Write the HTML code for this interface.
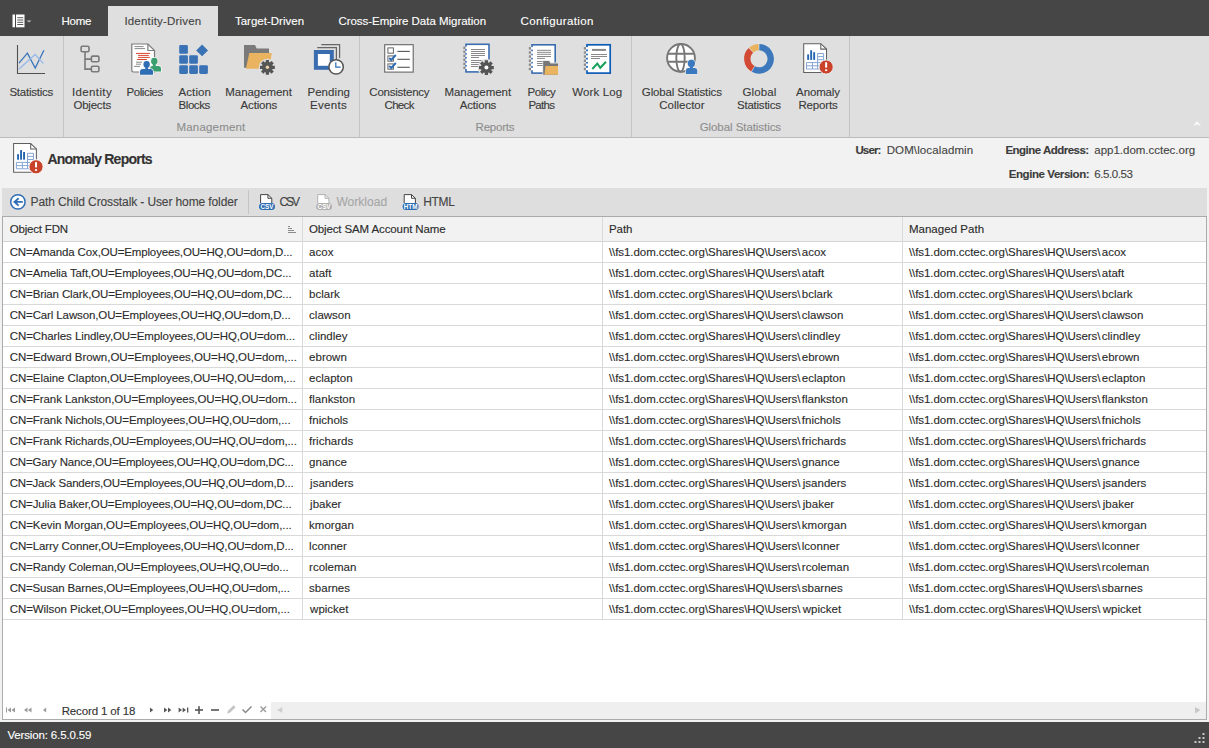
<!DOCTYPE html>
<html><head><meta charset="utf-8"><style>
html,body{margin:0;padding:0;}
body{width:1209px;height:748px;position:relative;overflow:hidden;background:#f2f2f2;font-family:"Liberation Sans", sans-serif;}
.r{position:absolute;}
.t{position:absolute;white-space:nowrap;-webkit-text-stroke:0.12px currentColor;}
</style></head><body>
<div class="r" style="left:0px;top:0px;width:1209px;height:36px;background:#464646;"></div>
<div class="r" style="left:0px;top:36px;width:1209px;height:101px;background:#dfdfdf;"></div>
<div class="r" style="left:0px;top:137px;width:1209px;height:1px;background:#bcbcbc;"></div>
<div class="r" style="left:0px;top:138px;width:1209px;height:50px;background:#f2f2f2;"></div>
<div class="r" style="left:108px;top:6px;width:110px;height:30px;background:#dfdfdf;"></div>
<div class="t" style="left:61.40px;top:16px;font-size:11.5px;line-height:11.5px;color:#fff;font-weight:normal;letter-spacing:-0.227px;">Home</div>
<div class="t" style="left:124.40px;top:16px;font-size:11.5px;line-height:11.5px;color:#444;font-weight:normal;letter-spacing:0.190px;">Identity-Driven</div>
<div class="t" style="left:234.90px;top:16px;font-size:11.5px;line-height:11.5px;color:#fff;font-weight:normal;letter-spacing:0.014px;">Target-Driven</div>
<div class="t" style="left:338.40px;top:16px;font-size:11.5px;line-height:11.5px;color:#fff;font-weight:normal;letter-spacing:-0.022px;">Cross-Empire Data Migration</div>
<div class="t" style="left:520.50px;top:16px;font-size:11.5px;line-height:11.5px;color:#fff;font-weight:normal;letter-spacing:0.366px;">Configuration</div>
<svg class="r" style="left:10px;top:12px" width="24" height="18" viewBox="0 0 24 18"><rect x="2.5" y="2.5" width="2.5" height="12.8" fill="#fff"/><rect x="6" y="2.5" width="8.5" height="12.8" fill="#fff"/><g stroke="#464646" stroke-width="0.9"><line x1="7.3" y1="5.7" x2="13.3" y2="5.7"/><line x1="7.3" y1="8" x2="13.3" y2="8"/><line x1="7.3" y1="10.3" x2="13.3" y2="10.3"/><line x1="7.3" y1="12.5" x2="13.3" y2="12.5"/></g><path d="M16.5 8.5 L21.5 8.5 L19 10.5 Z" fill="#bbb"/></svg>
<div class="r" style="left:63px;top:36px;width:1px;height:101px;background:#c4c4c4;"></div>
<div class="r" style="left:359px;top:36px;width:1px;height:101px;background:#c4c4c4;"></div>
<div class="r" style="left:631px;top:36px;width:1px;height:101px;background:#c4c4c4;"></div>
<div class="r" style="left:849px;top:36px;width:1px;height:101px;background:#c4c4c4;"></div>
<div class="t" style="left:9.40px;top:87px;font-size:11.5px;line-height:11.5px;color:#3a3a3a;font-weight:normal;letter-spacing:-0.229px;">Statistics</div>
<div class="t" style="left:71.90px;top:87px;font-size:11.5px;line-height:11.5px;color:#3a3a3a;font-weight:normal;letter-spacing:0.382px;">Identity</div>
<div class="t" style="left:73.40px;top:100px;font-size:11.5px;line-height:11.5px;color:#3a3a3a;font-weight:normal;letter-spacing:-0.206px;">Objects</div>
<div class="t" style="left:126.40px;top:87px;font-size:11.5px;line-height:11.5px;color:#3a3a3a;font-weight:normal;letter-spacing:-0.382px;">Policies</div>
<div class="t" style="left:178.50px;top:87px;font-size:11.5px;line-height:11.5px;color:#3a3a3a;font-weight:normal;letter-spacing:0.087px;">Action</div>
<div class="t" style="left:178.50px;top:100px;font-size:11.5px;line-height:11.5px;color:#3a3a3a;font-weight:normal;letter-spacing:-0.424px;">Blocks</div>
<div class="t" style="left:225.35px;top:87px;font-size:11.5px;line-height:11.5px;color:#3a3a3a;font-weight:normal;letter-spacing:-0.070px;">Management</div>
<div class="t" style="left:240.60px;top:100px;font-size:11.5px;line-height:11.5px;color:#3a3a3a;font-weight:normal;letter-spacing:-0.194px;">Actions</div>
<div class="t" style="left:307.40px;top:87px;font-size:11.5px;line-height:11.5px;color:#3a3a3a;font-weight:normal;letter-spacing:0.065px;">Pending</div>
<div class="t" style="left:310.00px;top:100px;font-size:11.5px;line-height:11.5px;color:#3a3a3a;font-weight:normal;letter-spacing:0.319px;">Events</div>
<div class="t" style="left:369.35px;top:87px;font-size:11.5px;line-height:11.5px;color:#3a3a3a;font-weight:normal;letter-spacing:-0.239px;">Consistency</div>
<div class="t" style="left:384.55px;top:100px;font-size:11.5px;line-height:11.5px;color:#3a3a3a;font-weight:normal;letter-spacing:-0.687px;">Check</div>
<div class="t" style="left:444.45px;top:87px;font-size:11.5px;line-height:11.5px;color:#3a3a3a;font-weight:normal;letter-spacing:-0.048px;">Management</div>
<div class="t" style="left:459.80px;top:100px;font-size:11.5px;line-height:11.5px;color:#3a3a3a;font-weight:normal;letter-spacing:-0.194px;">Actions</div>
<div class="t" style="left:527.50px;top:87px;font-size:11.5px;line-height:11.5px;color:#3a3a3a;font-weight:normal;letter-spacing:-0.465px;">Policy</div>
<div class="t" style="left:528.40px;top:100px;font-size:11.5px;line-height:11.5px;color:#3a3a3a;font-weight:normal;letter-spacing:-0.714px;">Paths</div>
<div class="t" style="left:572.25px;top:87px;font-size:11.5px;line-height:11.5px;color:#3a3a3a;font-weight:normal;letter-spacing:0.127px;">Work Log</div>
<div class="t" style="left:641.85px;top:87px;font-size:11.5px;line-height:11.5px;color:#3a3a3a;font-weight:normal;letter-spacing:-0.150px;">Global Statistics</div>
<div class="t" style="left:659.30px;top:100px;font-size:11.5px;line-height:11.5px;color:#3a3a3a;font-weight:normal;letter-spacing:-0.018px;">Collector</div>
<div class="t" style="left:742.50px;top:87px;font-size:11.5px;line-height:11.5px;color:#3a3a3a;font-weight:normal;letter-spacing:0.103px;">Global</div>
<div class="t" style="left:737.00px;top:100px;font-size:11.5px;line-height:11.5px;color:#3a3a3a;font-weight:normal;letter-spacing:-0.229px;">Statistics</div>
<div class="t" style="left:796.10px;top:87px;font-size:11.5px;line-height:11.5px;color:#3a3a3a;font-weight:normal;letter-spacing:-0.132px;">Anomaly</div>
<div class="t" style="left:798.50px;top:100px;font-size:11.5px;line-height:11.5px;color:#3a3a3a;font-weight:normal;letter-spacing:-0.186px;">Reports</div>
<div class="t" style="left:176.55px;top:122px;font-size:11.5px;line-height:11.5px;color:#8e8e8e;font-weight:normal;letter-spacing:0.175px;">Management</div>
<div class="t" style="left:475.55px;top:122px;font-size:11.5px;line-height:11.5px;color:#8e8e8e;font-weight:normal;letter-spacing:-0.203px;">Reports</div>
<div class="t" style="left:699.65px;top:122px;font-size:11.5px;line-height:11.5px;color:#8e8e8e;font-weight:normal;letter-spacing:-0.062px;">Global Statistics</div>
<svg class="r" style="left:1191px;top:119px" width="12" height="8" viewBox="0 0 12 8"><path d="M2 6.9 L6 2.3 L10 6.9 L6 5.2 Z" fill="#fff"/></svg>
<div class="t" style="left:47.40px;top:152px;font-size:14px;line-height:14px;color:#333;font-weight:bold;letter-spacing:-0.766px;">Anomaly Reports</div>
<div class="t" style="left:855.40px;top:145px;font-size:11.5px;line-height:11.5px;color:#3c3c3c;font-weight:bold;letter-spacing:-0.843px;">User:</div>
<div class="t" style="left:886.70px;top:145px;font-size:11.5px;line-height:11.5px;color:#444;font-weight:normal;letter-spacing:0.115px;">DOM\localadmin</div>
<div class="t" style="left:1005.40px;top:145px;font-size:11.5px;line-height:11.5px;color:#3c3c3c;font-weight:bold;letter-spacing:-0.511px;">Engine Address:</div>
<div class="t" style="left:1094.30px;top:145px;font-size:11.5px;line-height:11.5px;color:#444;font-weight:normal;letter-spacing:-0.012px;">app1.dom.cctec.org</div>
<div class="t" style="left:1008.80px;top:169px;font-size:11.5px;line-height:11.5px;color:#3c3c3c;font-weight:bold;letter-spacing:-0.434px;">Engine Version:</div>
<div class="t" style="left:1094.30px;top:169px;font-size:11.5px;line-height:11.5px;color:#444;font-weight:normal;letter-spacing:-0.438px;">6.5.0.53</div>
<div class="r" style="left:2px;top:188px;width:1205px;height:28px;background:#dedede;"></div>
<div class="r" style="left:248px;top:190px;width:1px;height:24px;background:#c4c4c4;"></div>
<div class="t" style="left:30.60px;top:196px;font-size:12px;line-height:12px;color:#444;font-weight:normal;letter-spacing:-0.111px;">Path Child Crosstalk - User home folder</div>
<div class="t" style="left:279.60px;top:196px;font-size:12px;line-height:12px;color:#444;font-weight:normal;letter-spacing:-2.185px;">CSV</div>
<div class="t" style="left:336.40px;top:196px;font-size:12px;line-height:12px;color:#a6a6a6;font-weight:normal;letter-spacing:0.044px;">Workload</div>
<div class="t" style="left:423.20px;top:196px;font-size:12px;line-height:12px;color:#444;font-weight:normal;letter-spacing:-0.297px;">HTML</div>
<div class="r" style="left:2px;top:216px;width:1205px;height:504px;background:#ffffff;box-sizing:border-box;border:1px solid #ababab;"></div>
<div class="r" style="left:3px;top:217px;width:1203px;height:24px;background:#f2f2f2;"></div>
<div class="r" style="left:3px;top:241px;width:1203px;height:1px;background:#d4d4d4;"></div>
<div class="r" style="left:3px;top:262px;width:1203px;height:1px;background:#d9d9d9;"></div>
<div class="r" style="left:3px;top:283px;width:1203px;height:1px;background:#d9d9d9;"></div>
<div class="r" style="left:3px;top:304px;width:1203px;height:1px;background:#d9d9d9;"></div>
<div class="r" style="left:3px;top:325px;width:1203px;height:1px;background:#d9d9d9;"></div>
<div class="r" style="left:3px;top:346px;width:1203px;height:1px;background:#d9d9d9;"></div>
<div class="r" style="left:3px;top:367px;width:1203px;height:1px;background:#d9d9d9;"></div>
<div class="r" style="left:3px;top:388px;width:1203px;height:1px;background:#d9d9d9;"></div>
<div class="r" style="left:3px;top:409px;width:1203px;height:1px;background:#d9d9d9;"></div>
<div class="r" style="left:3px;top:430px;width:1203px;height:1px;background:#d9d9d9;"></div>
<div class="r" style="left:3px;top:451px;width:1203px;height:1px;background:#d9d9d9;"></div>
<div class="r" style="left:3px;top:472px;width:1203px;height:1px;background:#d9d9d9;"></div>
<div class="r" style="left:3px;top:493px;width:1203px;height:1px;background:#d9d9d9;"></div>
<div class="r" style="left:3px;top:514px;width:1203px;height:1px;background:#d9d9d9;"></div>
<div class="r" style="left:3px;top:535px;width:1203px;height:1px;background:#d9d9d9;"></div>
<div class="r" style="left:3px;top:556px;width:1203px;height:1px;background:#d9d9d9;"></div>
<div class="r" style="left:3px;top:577px;width:1203px;height:1px;background:#d9d9d9;"></div>
<div class="r" style="left:3px;top:598px;width:1203px;height:1px;background:#d9d9d9;"></div>
<div class="r" style="left:3px;top:619px;width:1203px;height:1px;background:#d9d9d9;"></div>
<div class="r" style="left:302px;top:217px;width:1px;height:402px;background:#d9d9d9;"></div>
<div class="r" style="left:602px;top:217px;width:1px;height:402px;background:#d9d9d9;"></div>
<div class="r" style="left:902px;top:217px;width:1px;height:402px;background:#d9d9d9;"></div>
<div class="t" style="left:9.70px;top:224px;font-size:11.5px;line-height:11.5px;color:#2b2b2b;font-weight:normal;letter-spacing:-0.185px;">Object FDN</div>
<div class="t" style="left:308.90px;top:224px;font-size:11.5px;line-height:11.5px;color:#2b2b2b;font-weight:normal;letter-spacing:-0.117px;">Object SAM Account Name</div>
<div class="t" style="left:609.00px;top:224px;font-size:11.5px;line-height:11.5px;color:#2b2b2b;font-weight:normal;letter-spacing:-0.087px;">Path</div>
<div class="t" style="left:908.90px;top:224px;font-size:11.5px;line-height:11.5px;color:#2b2b2b;font-weight:normal;letter-spacing:0.035px;">Managed Path</div>
<svg class="r" style="left:286px;top:224px" width="12" height="12" viewBox="0 0 12 12"><g fill="#8a8a8a"><rect x="2" y="2" width="2" height="1"/><rect x="2" y="4" width="4" height="1"/><rect x="2" y="6" width="6" height="1"/><rect x="2" y="8" width="8" height="1"/></g></svg>
<div class="t" style="left:9.70px;top:247px;font-size:11.5px;line-height:11.5px;color:#2b2b2b;font-weight:normal;letter-spacing:-0.142px;">CN=Amanda Cox,OU=Employees,OU=HQ,OU=dom,D...</div>
<div class="t" style="left:309.10px;top:247px;font-size:11.5px;line-height:11.5px;color:#2b2b2b;font-weight:normal;">acox</div>
<div class="t" style="left:608.90px;top:247px;font-size:11.5px;line-height:11.5px;color:#2b2b2b;font-weight:normal;letter-spacing:-0.059px;">\\fs1.dom.cctec.org\Shares\HQ\Users\</div>
<div class="t" style="left:801.80px;top:247px;font-size:11.5px;line-height:11.5px;color:#2b2b2b;font-weight:normal;">acox</div>
<div class="t" style="left:908.90px;top:247px;font-size:11.5px;line-height:11.5px;color:#2b2b2b;font-weight:normal;letter-spacing:-0.059px;">\\fs1.dom.cctec.org\Shares\HQ\Users\</div>
<div class="t" style="left:1101.80px;top:247px;font-size:11.5px;line-height:11.5px;color:#2b2b2b;font-weight:normal;">acox</div>
<div class="t" style="left:9.70px;top:268px;font-size:11.5px;line-height:11.5px;color:#2b2b2b;font-weight:normal;letter-spacing:-0.124px;">CN=Amelia Taft,OU=Employees,OU=HQ,OU=dom,DC...</div>
<div class="t" style="left:309.10px;top:268px;font-size:11.5px;line-height:11.5px;color:#2b2b2b;font-weight:normal;">ataft</div>
<div class="t" style="left:608.90px;top:268px;font-size:11.5px;line-height:11.5px;color:#2b2b2b;font-weight:normal;letter-spacing:-0.059px;">\\fs1.dom.cctec.org\Shares\HQ\Users\</div>
<div class="t" style="left:801.80px;top:268px;font-size:11.5px;line-height:11.5px;color:#2b2b2b;font-weight:normal;">ataft</div>
<div class="t" style="left:908.90px;top:268px;font-size:11.5px;line-height:11.5px;color:#2b2b2b;font-weight:normal;letter-spacing:-0.059px;">\\fs1.dom.cctec.org\Shares\HQ\Users\</div>
<div class="t" style="left:1101.80px;top:268px;font-size:11.5px;line-height:11.5px;color:#2b2b2b;font-weight:normal;">ataft</div>
<div class="t" style="left:9.70px;top:289px;font-size:11.5px;line-height:11.5px;color:#2b2b2b;font-weight:normal;letter-spacing:-0.124px;">CN=Brian Clark,OU=Employees,OU=HQ,OU=dom,DC...</div>
<div class="t" style="left:309.10px;top:289px;font-size:11.5px;line-height:11.5px;color:#2b2b2b;font-weight:normal;">bclark</div>
<div class="t" style="left:608.90px;top:289px;font-size:11.5px;line-height:11.5px;color:#2b2b2b;font-weight:normal;letter-spacing:-0.059px;">\\fs1.dom.cctec.org\Shares\HQ\Users\</div>
<div class="t" style="left:801.80px;top:289px;font-size:11.5px;line-height:11.5px;color:#2b2b2b;font-weight:normal;">bclark</div>
<div class="t" style="left:908.90px;top:289px;font-size:11.5px;line-height:11.5px;color:#2b2b2b;font-weight:normal;letter-spacing:-0.059px;">\\fs1.dom.cctec.org\Shares\HQ\Users\</div>
<div class="t" style="left:1101.80px;top:289px;font-size:11.5px;line-height:11.5px;color:#2b2b2b;font-weight:normal;">bclark</div>
<div class="t" style="left:9.70px;top:310px;font-size:11.5px;line-height:11.5px;color:#2b2b2b;font-weight:normal;letter-spacing:-0.121px;">CN=Carl Lawson,OU=Employees,OU=HQ,OU=dom,D...</div>
<div class="t" style="left:309.10px;top:310px;font-size:11.5px;line-height:11.5px;color:#2b2b2b;font-weight:normal;">clawson</div>
<div class="t" style="left:608.90px;top:310px;font-size:11.5px;line-height:11.5px;color:#2b2b2b;font-weight:normal;letter-spacing:-0.059px;">\\fs1.dom.cctec.org\Shares\HQ\Users\</div>
<div class="t" style="left:801.80px;top:310px;font-size:11.5px;line-height:11.5px;color:#2b2b2b;font-weight:normal;">clawson</div>
<div class="t" style="left:908.90px;top:310px;font-size:11.5px;line-height:11.5px;color:#2b2b2b;font-weight:normal;letter-spacing:-0.059px;">\\fs1.dom.cctec.org\Shares\HQ\Users\</div>
<div class="t" style="left:1101.80px;top:310px;font-size:11.5px;line-height:11.5px;color:#2b2b2b;font-weight:normal;">clawson</div>
<div class="t" style="left:9.70px;top:331px;font-size:11.5px;line-height:11.5px;color:#2b2b2b;font-weight:normal;letter-spacing:-0.085px;">CN=Charles Lindley,OU=Employees,OU=HQ,OU=dom...</div>
<div class="t" style="left:309.10px;top:331px;font-size:11.5px;line-height:11.5px;color:#2b2b2b;font-weight:normal;">clindley</div>
<div class="t" style="left:608.90px;top:331px;font-size:11.5px;line-height:11.5px;color:#2b2b2b;font-weight:normal;letter-spacing:-0.059px;">\\fs1.dom.cctec.org\Shares\HQ\Users\</div>
<div class="t" style="left:801.80px;top:331px;font-size:11.5px;line-height:11.5px;color:#2b2b2b;font-weight:normal;">clindley</div>
<div class="t" style="left:908.90px;top:331px;font-size:11.5px;line-height:11.5px;color:#2b2b2b;font-weight:normal;letter-spacing:-0.059px;">\\fs1.dom.cctec.org\Shares\HQ\Users\</div>
<div class="t" style="left:1101.80px;top:331px;font-size:11.5px;line-height:11.5px;color:#2b2b2b;font-weight:normal;">clindley</div>
<div class="t" style="left:9.70px;top:352px;font-size:11.5px;line-height:11.5px;color:#2b2b2b;font-weight:normal;letter-spacing:-0.038px;">CN=Edward Brown,OU=Employees,OU=HQ,OU=dom,...</div>
<div class="t" style="left:309.10px;top:352px;font-size:11.5px;line-height:11.5px;color:#2b2b2b;font-weight:normal;">ebrown</div>
<div class="t" style="left:608.90px;top:352px;font-size:11.5px;line-height:11.5px;color:#2b2b2b;font-weight:normal;letter-spacing:-0.059px;">\\fs1.dom.cctec.org\Shares\HQ\Users\</div>
<div class="t" style="left:801.80px;top:352px;font-size:11.5px;line-height:11.5px;color:#2b2b2b;font-weight:normal;">ebrown</div>
<div class="t" style="left:908.90px;top:352px;font-size:11.5px;line-height:11.5px;color:#2b2b2b;font-weight:normal;letter-spacing:-0.059px;">\\fs1.dom.cctec.org\Shares\HQ\Users\</div>
<div class="t" style="left:1101.80px;top:352px;font-size:11.5px;line-height:11.5px;color:#2b2b2b;font-weight:normal;">ebrown</div>
<div class="t" style="left:9.70px;top:373px;font-size:11.5px;line-height:11.5px;color:#2b2b2b;font-weight:normal;letter-spacing:-0.061px;">CN=Elaine Clapton,OU=Employees,OU=HQ,OU=dom,...</div>
<div class="t" style="left:309.10px;top:373px;font-size:11.5px;line-height:11.5px;color:#2b2b2b;font-weight:normal;">eclapton</div>
<div class="t" style="left:608.90px;top:373px;font-size:11.5px;line-height:11.5px;color:#2b2b2b;font-weight:normal;letter-spacing:-0.059px;">\\fs1.dom.cctec.org\Shares\HQ\Users\</div>
<div class="t" style="left:801.80px;top:373px;font-size:11.5px;line-height:11.5px;color:#2b2b2b;font-weight:normal;">eclapton</div>
<div class="t" style="left:908.90px;top:373px;font-size:11.5px;line-height:11.5px;color:#2b2b2b;font-weight:normal;letter-spacing:-0.059px;">\\fs1.dom.cctec.org\Shares\HQ\Users\</div>
<div class="t" style="left:1101.80px;top:373px;font-size:11.5px;line-height:11.5px;color:#2b2b2b;font-weight:normal;">eclapton</div>
<div class="t" style="left:9.70px;top:394px;font-size:11.5px;line-height:11.5px;color:#2b2b2b;font-weight:normal;letter-spacing:-0.066px;">CN=Frank Lankston,OU=Employees,OU=HQ,OU=dom...</div>
<div class="t" style="left:309.10px;top:394px;font-size:11.5px;line-height:11.5px;color:#2b2b2b;font-weight:normal;">flankston</div>
<div class="t" style="left:608.90px;top:394px;font-size:11.5px;line-height:11.5px;color:#2b2b2b;font-weight:normal;letter-spacing:-0.059px;">\\fs1.dom.cctec.org\Shares\HQ\Users\</div>
<div class="t" style="left:801.80px;top:394px;font-size:11.5px;line-height:11.5px;color:#2b2b2b;font-weight:normal;">flankston</div>
<div class="t" style="left:908.90px;top:394px;font-size:11.5px;line-height:11.5px;color:#2b2b2b;font-weight:normal;letter-spacing:-0.059px;">\\fs1.dom.cctec.org\Shares\HQ\Users\</div>
<div class="t" style="left:1101.80px;top:394px;font-size:11.5px;line-height:11.5px;color:#2b2b2b;font-weight:normal;">flankston</div>
<div class="t" style="left:9.70px;top:415px;font-size:11.5px;line-height:11.5px;color:#2b2b2b;font-weight:normal;letter-spacing:-0.076px;">CN=Frank Nichols,OU=Employees,OU=HQ,OU=dom,...</div>
<div class="t" style="left:309.10px;top:415px;font-size:11.5px;line-height:11.5px;color:#2b2b2b;font-weight:normal;">fnichols</div>
<div class="t" style="left:608.90px;top:415px;font-size:11.5px;line-height:11.5px;color:#2b2b2b;font-weight:normal;letter-spacing:-0.059px;">\\fs1.dom.cctec.org\Shares\HQ\Users\</div>
<div class="t" style="left:801.80px;top:415px;font-size:11.5px;line-height:11.5px;color:#2b2b2b;font-weight:normal;">fnichols</div>
<div class="t" style="left:908.90px;top:415px;font-size:11.5px;line-height:11.5px;color:#2b2b2b;font-weight:normal;letter-spacing:-0.059px;">\\fs1.dom.cctec.org\Shares\HQ\Users\</div>
<div class="t" style="left:1101.80px;top:415px;font-size:11.5px;line-height:11.5px;color:#2b2b2b;font-weight:normal;">fnichols</div>
<div class="t" style="left:9.70px;top:436px;font-size:11.5px;line-height:11.5px;color:#2b2b2b;font-weight:normal;letter-spacing:-0.106px;">CN=Frank Richards,OU=Employees,OU=HQ,OU=dom,...</div>
<div class="t" style="left:309.10px;top:436px;font-size:11.5px;line-height:11.5px;color:#2b2b2b;font-weight:normal;">frichards</div>
<div class="t" style="left:608.90px;top:436px;font-size:11.5px;line-height:11.5px;color:#2b2b2b;font-weight:normal;letter-spacing:-0.059px;">\\fs1.dom.cctec.org\Shares\HQ\Users\</div>
<div class="t" style="left:801.80px;top:436px;font-size:11.5px;line-height:11.5px;color:#2b2b2b;font-weight:normal;">frichards</div>
<div class="t" style="left:908.90px;top:436px;font-size:11.5px;line-height:11.5px;color:#2b2b2b;font-weight:normal;letter-spacing:-0.059px;">\\fs1.dom.cctec.org\Shares\HQ\Users\</div>
<div class="t" style="left:1101.80px;top:436px;font-size:11.5px;line-height:11.5px;color:#2b2b2b;font-weight:normal;">frichards</div>
<div class="t" style="left:9.70px;top:457px;font-size:11.5px;line-height:11.5px;color:#2b2b2b;font-weight:normal;letter-spacing:-0.181px;">CN=Gary Nance,OU=Employees,OU=HQ,OU=dom,DC...</div>
<div class="t" style="left:309.10px;top:457px;font-size:11.5px;line-height:11.5px;color:#2b2b2b;font-weight:normal;">gnance</div>
<div class="t" style="left:608.90px;top:457px;font-size:11.5px;line-height:11.5px;color:#2b2b2b;font-weight:normal;letter-spacing:-0.059px;">\\fs1.dom.cctec.org\Shares\HQ\Users\</div>
<div class="t" style="left:801.80px;top:457px;font-size:11.5px;line-height:11.5px;color:#2b2b2b;font-weight:normal;">gnance</div>
<div class="t" style="left:908.90px;top:457px;font-size:11.5px;line-height:11.5px;color:#2b2b2b;font-weight:normal;letter-spacing:-0.059px;">\\fs1.dom.cctec.org\Shares\HQ\Users\</div>
<div class="t" style="left:1101.80px;top:457px;font-size:11.5px;line-height:11.5px;color:#2b2b2b;font-weight:normal;">gnance</div>
<div class="t" style="left:9.70px;top:478px;font-size:11.5px;line-height:11.5px;color:#2b2b2b;font-weight:normal;letter-spacing:-0.177px;">CN=Jack Sanders,OU=Employees,OU=HQ,OU=dom,D...</div>
<div class="t" style="left:310.10px;top:478px;font-size:11.5px;line-height:11.5px;color:#2b2b2b;font-weight:normal;">jsanders</div>
<div class="t" style="left:608.90px;top:478px;font-size:11.5px;line-height:11.5px;color:#2b2b2b;font-weight:normal;letter-spacing:-0.059px;">\\fs1.dom.cctec.org\Shares\HQ\Users\</div>
<div class="t" style="left:802.80px;top:478px;font-size:11.5px;line-height:11.5px;color:#2b2b2b;font-weight:normal;">jsanders</div>
<div class="t" style="left:908.90px;top:478px;font-size:11.5px;line-height:11.5px;color:#2b2b2b;font-weight:normal;letter-spacing:-0.059px;">\\fs1.dom.cctec.org\Shares\HQ\Users\</div>
<div class="t" style="left:1102.80px;top:478px;font-size:11.5px;line-height:11.5px;color:#2b2b2b;font-weight:normal;">jsanders</div>
<div class="t" style="left:9.70px;top:499px;font-size:11.5px;line-height:11.5px;color:#2b2b2b;font-weight:normal;letter-spacing:-0.110px;">CN=Julia Baker,OU=Employees,OU=HQ,OU=dom,DC...</div>
<div class="t" style="left:310.10px;top:499px;font-size:11.5px;line-height:11.5px;color:#2b2b2b;font-weight:normal;">jbaker</div>
<div class="t" style="left:608.90px;top:499px;font-size:11.5px;line-height:11.5px;color:#2b2b2b;font-weight:normal;letter-spacing:-0.059px;">\\fs1.dom.cctec.org\Shares\HQ\Users\</div>
<div class="t" style="left:802.80px;top:499px;font-size:11.5px;line-height:11.5px;color:#2b2b2b;font-weight:normal;">jbaker</div>
<div class="t" style="left:908.90px;top:499px;font-size:11.5px;line-height:11.5px;color:#2b2b2b;font-weight:normal;letter-spacing:-0.059px;">\\fs1.dom.cctec.org\Shares\HQ\Users\</div>
<div class="t" style="left:1102.80px;top:499px;font-size:11.5px;line-height:11.5px;color:#2b2b2b;font-weight:normal;">jbaker</div>
<div class="t" style="left:9.70px;top:520px;font-size:11.5px;line-height:11.5px;color:#2b2b2b;font-weight:normal;letter-spacing:-0.069px;">CN=Kevin Morgan,OU=Employees,OU=HQ,OU=dom,...</div>
<div class="t" style="left:309.10px;top:520px;font-size:11.5px;line-height:11.5px;color:#2b2b2b;font-weight:normal;">kmorgan</div>
<div class="t" style="left:608.90px;top:520px;font-size:11.5px;line-height:11.5px;color:#2b2b2b;font-weight:normal;letter-spacing:-0.059px;">\\fs1.dom.cctec.org\Shares\HQ\Users\</div>
<div class="t" style="left:801.80px;top:520px;font-size:11.5px;line-height:11.5px;color:#2b2b2b;font-weight:normal;">kmorgan</div>
<div class="t" style="left:908.90px;top:520px;font-size:11.5px;line-height:11.5px;color:#2b2b2b;font-weight:normal;letter-spacing:-0.059px;">\\fs1.dom.cctec.org\Shares\HQ\Users\</div>
<div class="t" style="left:1101.80px;top:520px;font-size:11.5px;line-height:11.5px;color:#2b2b2b;font-weight:normal;">kmorgan</div>
<div class="t" style="left:9.70px;top:541px;font-size:11.5px;line-height:11.5px;color:#2b2b2b;font-weight:normal;letter-spacing:-0.106px;">CN=Larry Conner,OU=Employees,OU=HQ,OU=dom,D...</div>
<div class="t" style="left:309.10px;top:541px;font-size:11.5px;line-height:11.5px;color:#2b2b2b;font-weight:normal;">lconner</div>
<div class="t" style="left:608.90px;top:541px;font-size:11.5px;line-height:11.5px;color:#2b2b2b;font-weight:normal;letter-spacing:-0.059px;">\\fs1.dom.cctec.org\Shares\HQ\Users\</div>
<div class="t" style="left:801.80px;top:541px;font-size:11.5px;line-height:11.5px;color:#2b2b2b;font-weight:normal;">lconner</div>
<div class="t" style="left:908.90px;top:541px;font-size:11.5px;line-height:11.5px;color:#2b2b2b;font-weight:normal;letter-spacing:-0.059px;">\\fs1.dom.cctec.org\Shares\HQ\Users\</div>
<div class="t" style="left:1101.80px;top:541px;font-size:11.5px;line-height:11.5px;color:#2b2b2b;font-weight:normal;">lconner</div>
<div class="t" style="left:9.70px;top:562px;font-size:11.5px;line-height:11.5px;color:#2b2b2b;font-weight:normal;letter-spacing:-0.111px;">CN=Randy Coleman,OU=Employees,OU=HQ,OU=do...</div>
<div class="t" style="left:309.10px;top:562px;font-size:11.5px;line-height:11.5px;color:#2b2b2b;font-weight:normal;">rcoleman</div>
<div class="t" style="left:608.90px;top:562px;font-size:11.5px;line-height:11.5px;color:#2b2b2b;font-weight:normal;letter-spacing:-0.059px;">\\fs1.dom.cctec.org\Shares\HQ\Users\</div>
<div class="t" style="left:801.80px;top:562px;font-size:11.5px;line-height:11.5px;color:#2b2b2b;font-weight:normal;">rcoleman</div>
<div class="t" style="left:908.90px;top:562px;font-size:11.5px;line-height:11.5px;color:#2b2b2b;font-weight:normal;letter-spacing:-0.059px;">\\fs1.dom.cctec.org\Shares\HQ\Users\</div>
<div class="t" style="left:1101.80px;top:562px;font-size:11.5px;line-height:11.5px;color:#2b2b2b;font-weight:normal;">rcoleman</div>
<div class="t" style="left:9.70px;top:583px;font-size:11.5px;line-height:11.5px;color:#2b2b2b;font-weight:normal;letter-spacing:-0.140px;">CN=Susan Barnes,OU=Employees,OU=HQ,OU=dom,...</div>
<div class="t" style="left:309.10px;top:583px;font-size:11.5px;line-height:11.5px;color:#2b2b2b;font-weight:normal;">sbarnes</div>
<div class="t" style="left:608.90px;top:583px;font-size:11.5px;line-height:11.5px;color:#2b2b2b;font-weight:normal;letter-spacing:-0.059px;">\\fs1.dom.cctec.org\Shares\HQ\Users\</div>
<div class="t" style="left:801.80px;top:583px;font-size:11.5px;line-height:11.5px;color:#2b2b2b;font-weight:normal;">sbarnes</div>
<div class="t" style="left:908.90px;top:583px;font-size:11.5px;line-height:11.5px;color:#2b2b2b;font-weight:normal;letter-spacing:-0.059px;">\\fs1.dom.cctec.org\Shares\HQ\Users\</div>
<div class="t" style="left:1101.80px;top:583px;font-size:11.5px;line-height:11.5px;color:#2b2b2b;font-weight:normal;">sbarnes</div>
<div class="t" style="left:9.70px;top:604px;font-size:11.5px;line-height:11.5px;color:#2b2b2b;font-weight:normal;letter-spacing:-0.065px;">CN=Wilson Picket,OU=Employees,OU=HQ,OU=dom,...</div>
<div class="t" style="left:310.10px;top:604px;font-size:11.5px;line-height:11.5px;color:#2b2b2b;font-weight:normal;">wpicket</div>
<div class="t" style="left:608.90px;top:604px;font-size:11.5px;line-height:11.5px;color:#2b2b2b;font-weight:normal;letter-spacing:-0.059px;">\\fs1.dom.cctec.org\Shares\HQ\Users\</div>
<div class="t" style="left:802.80px;top:604px;font-size:11.5px;line-height:11.5px;color:#2b2b2b;font-weight:normal;">wpicket</div>
<div class="t" style="left:908.90px;top:604px;font-size:11.5px;line-height:11.5px;color:#2b2b2b;font-weight:normal;letter-spacing:-0.059px;">\\fs1.dom.cctec.org\Shares\HQ\Users\</div>
<div class="t" style="left:1102.80px;top:604px;font-size:11.5px;line-height:11.5px;color:#2b2b2b;font-weight:normal;">wpicket</div>
<div class="r" style="left:271px;top:702px;width:935px;height:17px;background:#efefef;"></div>
<div class="t" style="left:61.70px;top:706px;font-size:11.5px;line-height:11.5px;color:#333;font-weight:normal;letter-spacing:-0.141px;">Record 1 of 18</div>
<svg class="r" style="left:0px;top:700px" width="300" height="20" viewBox="0 0 300 20">
<g fill="#9a9a9a">
<rect x="6" y="7.5" width="1" height="5"/><path d="M7.5 10 L11 7.5 L11 12.5Z"/><path d="M11.5 10 L15 7.5 L15 12.5Z"/>
<path d="M24 10 L27.5 7.5 L27.5 12.5Z"/><path d="M28 10 L31.5 7.5 L31.5 12.5Z"/>
<path d="M43 10 L46.2 7.5 L46.2 12.5Z"/>
</g>
<g fill="#555">
<path d="M153.2 10 L150 7.5 L150 12.5Z"/>
<path d="M167.3 10 L164 7.5 L164 12.5Z"/><path d="M171.3 10 L168 7.5 L168 12.5Z"/>
<path d="M182 10 L178.6 7.5 L178.6 12.5Z"/><path d="M186 10 L182.6 7.5 L182.6 12.5Z"/><rect x="187" y="7.5" width="1.3" height="5"/>
<rect x="195" y="9.2" width="8" height="1.6"/><rect x="198.2" y="6.2" width="1.6" height="7.8"/>
<rect x="211" y="9.2" width="8" height="1.6"/>
</g>
<path d="M227 13.8 L228.2 10.6 L233.6 5.2 L235.6 7.2 L230.2 12.6Z" fill="#c4c4c4"/>
<path d="M242.5 9.5 L245.5 12.5 L251.5 6.5" fill="none" stroke="#8a8a8a" stroke-width="1.5"/>
<path d="M260.5 6.5 L266 12 M266 6.5 L260.5 12" fill="none" stroke="#999" stroke-width="1.3"/>
<path d="M277 10 L282.3 7 L282.3 13Z" fill="#cfcfcf"/>
</svg>
<svg class="r" style="left:1190px;top:705px" width="14" height="12" viewBox="0 0 14 12"><path d="M5 2 L10.5 5 L5 8.5Z" fill="#c8c8c8"/></svg>
<div class="r" style="left:0px;top:722px;width:1209px;height:26px;background:#464646;"></div>
<div class="t" style="left:7.40px;top:730px;font-size:11.5px;line-height:11.5px;color:#fff;font-weight:normal;letter-spacing:-0.145px;">Version: 6.5.0.59</div>
<svg class="r" style="left:1190px;top:730px" width="16" height="16" viewBox="0 0 16 16"><g fill="#c6c6c6"><rect x="12.5" y="3" width="2" height="2"/><rect x="8.5" y="7" width="2" height="2"/><rect x="12.5" y="7" width="2" height="2"/><rect x="4.5" y="11" width="2" height="2"/><rect x="8.5" y="11" width="2" height="2"/><rect x="12.5" y="11" width="2" height="2"/></g></svg>
<svg class="r" style="left:0px;top:0px" width="1209" height="137" viewBox="0 0 1209 137"><path d="M17.5 45 V73.5 H45" fill="none" stroke="#505050" stroke-width="1.1"/><path d="M19 63.2 L27.4 53.2 L35.2 68.1 L43.9 50.3" fill="none" stroke="#3b75b9" stroke-width="1.3"/><path d="M19 69 L35.2 54.5 L43.5 63.6" fill="none" stroke="#95baea" stroke-width="1.3"/><g fill="none" stroke="#7a7a7a" stroke-width="1.6"><rect x="81.1" y="46.2" width="7.9" height="5.6" rx="1.2"/><rect x="91.4" y="56.1" width="7.5" height="5.6" rx="1.2"/><rect x="91.4" y="66.3" width="7.5" height="5.4" rx="1.2"/><path d="M85 51.8 V69.1 H91.4 M85 59.1 H91.4"/></g><path d="M131.8 44 H147.9 L154.5 50.5 V72 H133.5 Q131.8 72 131.8 70.3 Z" fill="#fff" stroke="#7a7a7a" stroke-width="1.2"/><path d="M147.9 44 V50.5 H154.5" fill="none" stroke="#7a7a7a" stroke-width="1.2"/><path d="M134.5 46.6 H143.5" stroke="#8a8a8a" stroke-width="1"/><path d="M134.5 48.6 H145" stroke="#8a8a8a" stroke-width="1"/><path d="M136 53.4 H150" stroke="#d9452f" stroke-width="1"/><path d="M138.1 55.4 H148.8" stroke="#d9452f" stroke-width="1"/><path d="M138.1 57.4 H149.8" stroke="#d9452f" stroke-width="1"/><path d="M137.1 59.5 H146.8" stroke="#d9452f" stroke-width="1"/><path d="M136 62.2 H142" stroke="#8a8a8a" stroke-width="1"/><path d="M136 64.2 H141" stroke="#8a8a8a" stroke-width="1"/><path d="M134 66.4 H140" stroke="#8a8a8a" stroke-width="1"/><g fill="#f4f4f4" stroke="#f4f4f4" stroke-width="1.6"><ellipse cx="154.3" cy="61.2" rx="3.2" ry="3.4"/><rect x="152.9" y="63.60000000000001" width="2.8" height="2.8999999999999915"/><path d="M150 71.5 V68.8 Q150 66 152.8 66 H158.2 Q161 66 161 68.8 V71.5 Z"/></g><g fill="#3a9e6e"><ellipse cx="154.3" cy="61.2" rx="3.2" ry="3.4"/><rect x="152.9" y="63.60000000000001" width="2.8" height="2.8999999999999915"/><path d="M150 71.5 V68.8 Q150 66 152.8 66 H158.2 Q161 66 161 68.8 V71.5 Z"/></g><g fill="#f4f4f4" stroke="#f4f4f4" stroke-width="1.6"><ellipse cx="146.65" cy="64.4" rx="3.15" ry="3.3"/><rect x="145.25" y="66.7" width="2.8" height="2.8999999999999915"/><path d="M140 74.8 V71.89999999999999 Q140 69.1 142.8 69.1 H150.2 Q153 69.1 153 71.89999999999999 V74.8 Z"/></g><g fill="#2f6db5"><ellipse cx="146.65" cy="64.4" rx="3.15" ry="3.3"/><rect x="145.25" y="66.7" width="2.8" height="2.8999999999999915"/><path d="M140 74.8 V71.89999999999999 Q140 69.1 142.8 69.1 H150.2 Q153 69.1 153 71.89999999999999 V74.8 Z"/></g><rect x="179.2" y="45.1" width="8.7" height="8.7" rx="1.3" fill="#3a72b6"/><rect x="179.2" y="55.150000000000006" width="8.7" height="8.7" rx="1.3" fill="#3a72b6"/><rect x="189.2" y="55.150000000000006" width="8.7" height="8.7" rx="1.3" fill="#3a72b6"/><rect x="179.2" y="65.2" width="8.7" height="8.7" rx="1.3" fill="#3a72b6"/><rect x="189.2" y="65.2" width="8.7" height="8.7" rx="1.3" fill="#3a72b6"/><rect x="199.2" y="65.2" width="8.7" height="8.7" rx="1.3" fill="#3a72b6"/><path d="M202.1 44.5 L208 50.4 L202.1 56.3 L196.2 50.4 Z" fill="#3a72b6"/><path d="M244 45.1 H255 L256.7 48.5 H269 V67.8 H244 Z" fill="#7a7a7a"/><path d="M249.3 53 H271.8 L269.3 68.7 H245.9 Z" fill="#e9b35f"/><circle cx="267.4" cy="67.3" r="8.6" fill="#dfdfdf"/><path d="M265.76 62.26 L265.77 59.88 L269.03 59.88 L269.04 62.26 L269.81 62.58 L271.50 60.90 L273.80 63.20 L272.12 64.89 L272.44 65.66 L274.82 65.67 L274.82 68.93 L272.44 68.94 L272.12 69.71 L273.80 71.40 L271.50 73.70 L269.81 72.02 L269.04 72.34 L269.03 74.72 L265.77 74.72 L265.76 72.34 L264.99 72.02 L263.30 73.70 L261.00 71.40 L262.68 69.71 L262.36 68.94 L259.98 68.93 L259.98 65.67 L262.36 65.66 L262.68 64.89 L261.00 63.20 L263.30 60.90 L264.99 62.58Z" fill="#555"/><circle cx="267.4" cy="67.3" r="5.3" fill="#555"/><circle cx="267.4" cy="67.3" r="1.7" fill="#e9d3a8"/><path d="M321.3 44.6 H339.6 V58" fill="none" stroke="#666" stroke-width="1.2"/><path d="M317.2 47.6 H336.4 V60" fill="none" stroke="#666" stroke-width="1.2"/><rect x="315.9" y="52" width="15.9" height="15.8" fill="#fff" stroke="#3a6db0" stroke-width="4"/><circle cx="336.1" cy="66.9" r="7.2" fill="#fff" stroke="#555" stroke-width="1.5"/><path d="M335.8 62.2 V67.2 H340.6" fill="none" stroke="#2f6db5" stroke-width="1.2"/><rect x="384.7" y="44.7" width="28.5" height="27.4" fill="#fff" stroke="#666" stroke-width="1.1"/><g fill="#fff" stroke="#666" stroke-width="1"><rect x="387.9" y="47.9" width="5.5" height="5.3"/><rect x="387.9" y="55.9" width="5.5" height="5.3"/><rect x="387.9" y="63.9" width="5.5" height="5.3"/></g><path d="M397.4 51.4 H409.8" stroke="#555" stroke-width="1.1"/><path d="M397.4 59.3 H409.8" stroke="#555" stroke-width="1.1"/><path d="M397.4 67.3 H409.8" stroke="#555" stroke-width="1.1"/><path d="M389.2 57.8 L391.2 60 L395.8 55 M389.2 65.8 L391.2 68 L395.8 63" fill="none" stroke="#2f6db5" stroke-width="1.9"/><rect x="466" y="44.3" width="23" height="27.6" fill="#fff" stroke="#3a6db0" stroke-width="1.6"/><rect x="463.3" y="46.599999999999994" width="2.2" height="2.4" fill="#8a8a8a"/><rect x="465.5" y="46.599999999999994" width="2.2" height="2.4" fill="#fff"/><rect x="463.3" y="50.599999999999994" width="2.2" height="2.4" fill="#8a8a8a"/><rect x="465.5" y="50.599999999999994" width="2.2" height="2.4" fill="#fff"/><rect x="463.3" y="54.599999999999994" width="2.2" height="2.4" fill="#8a8a8a"/><rect x="465.5" y="54.599999999999994" width="2.2" height="2.4" fill="#fff"/><rect x="463.3" y="58.599999999999994" width="2.2" height="2.4" fill="#8a8a8a"/><rect x="465.5" y="58.599999999999994" width="2.2" height="2.4" fill="#fff"/><rect x="463.3" y="62.599999999999994" width="2.2" height="2.4" fill="#8a8a8a"/><rect x="465.5" y="62.599999999999994" width="2.2" height="2.4" fill="#fff"/><rect x="463.3" y="66.6" width="2.2" height="2.4" fill="#8a8a8a"/><rect x="465.5" y="66.6" width="2.2" height="2.4" fill="#fff"/><path d="M471 49.5 H485" stroke="#8a8a8a" stroke-width="1"/><path d="M471 51.5 H485" stroke="#8a8a8a" stroke-width="1"/><path d="M471 53.5 H485" stroke="#8a8a8a" stroke-width="1"/><path d="M471 55.5 H485" stroke="#8a8a8a" stroke-width="1"/><path d="M471 57.5 H479" stroke="#8a8a8a" stroke-width="1"/><path d="M471 60.5 H483" stroke="#8a8a8a" stroke-width="1"/><path d="M471 62.5 H483" stroke="#8a8a8a" stroke-width="1"/><path d="M471 64.5 H483" stroke="#8a8a8a" stroke-width="1"/><path d="M471 66.5 H478" stroke="#8a8a8a" stroke-width="1"/><circle cx="486.4" cy="67.6" r="8.8" fill="#dfdfdf"/><path d="M484.76 62.56 L484.77 60.18 L488.03 60.18 L488.04 62.56 L488.81 62.88 L490.50 61.20 L492.80 63.50 L491.12 65.19 L491.44 65.96 L493.82 65.97 L493.82 69.23 L491.44 69.24 L491.12 70.01 L492.80 71.70 L490.50 74.00 L488.81 72.32 L488.04 72.64 L488.03 75.02 L484.77 75.02 L484.76 72.64 L483.99 72.32 L482.30 74.00 L480.00 71.70 L481.68 70.01 L481.36 69.24 L478.98 69.23 L478.98 65.97 L481.36 65.96 L481.68 65.19 L480.00 63.50 L482.30 61.20 L483.99 62.88Z" fill="#555"/><circle cx="486.4" cy="67.6" r="5.3" fill="#555"/><circle cx="486.4" cy="67.6" r="2" fill="#fff"/><rect x="532" y="44.8" width="23.2" height="28.3" fill="#fff" stroke="#3a6db0" stroke-width="1.6"/><rect x="528.8" y="47.099999999999994" width="2.2" height="2.4" fill="#8a8a8a"/><rect x="531.0" y="47.099999999999994" width="2.2" height="2.4" fill="#fff"/><rect x="528.8" y="51.3" width="2.2" height="2.4" fill="#8a8a8a"/><rect x="531.0" y="51.3" width="2.2" height="2.4" fill="#fff"/><rect x="528.8" y="55.3" width="2.2" height="2.4" fill="#8a8a8a"/><rect x="531.0" y="55.3" width="2.2" height="2.4" fill="#fff"/><rect x="528.8" y="59.5" width="2.2" height="2.4" fill="#8a8a8a"/><rect x="531.0" y="59.5" width="2.2" height="2.4" fill="#fff"/><rect x="528.8" y="63.5" width="2.2" height="2.4" fill="#8a8a8a"/><rect x="531.0" y="63.5" width="2.2" height="2.4" fill="#fff"/><rect x="528.8" y="67.8" width="2.2" height="2.4" fill="#8a8a8a"/><rect x="531.0" y="67.8" width="2.2" height="2.4" fill="#fff"/><path d="M537 50.3 H551" stroke="#8a8a8a" stroke-width="1"/><path d="M537 52.3 H551" stroke="#8a8a8a" stroke-width="1"/><path d="M537 54.3 H551" stroke="#8a8a8a" stroke-width="1"/><path d="M537 56.5 H551" stroke="#8a8a8a" stroke-width="1"/><path d="M537 58.4 H545" stroke="#8a8a8a" stroke-width="1"/><path d="M537 61.5 H543" stroke="#8a8a8a" stroke-width="1"/><path d="M537 63.5 H543" stroke="#8a8a8a" stroke-width="1"/><path d="M537 65.5 H543" stroke="#8a8a8a" stroke-width="1"/><path d="M542.5 60.2 H549.5 L551 62.6 H559 V75.5 H542.5 Z" fill="#dfdfdf"/><path d="M543.2 61.1 H549 L550.5 63.5 H558 V74.7 H543.2 Z" fill="#777"/><path d="M545.5 66 H558 V74.7 H544.5 Z" fill="#e9b35f"/><rect x="587" y="44.8" width="23.2" height="28.3" fill="#fff" stroke="#0d5cb6" stroke-width="1.7"/><rect x="583.8" y="47.099999999999994" width="2.2" height="2.4" fill="#8a8a8a"/><rect x="586.0" y="47.099999999999994" width="2.2" height="2.4" fill="#fff"/><rect x="583.8" y="51.3" width="2.2" height="2.4" fill="#8a8a8a"/><rect x="586.0" y="51.3" width="2.2" height="2.4" fill="#fff"/><rect x="583.8" y="55.3" width="2.2" height="2.4" fill="#8a8a8a"/><rect x="586.0" y="55.3" width="2.2" height="2.4" fill="#fff"/><rect x="583.8" y="59.5" width="2.2" height="2.4" fill="#8a8a8a"/><rect x="586.0" y="59.5" width="2.2" height="2.4" fill="#fff"/><rect x="583.8" y="63.5" width="2.2" height="2.4" fill="#8a8a8a"/><rect x="586.0" y="63.5" width="2.2" height="2.4" fill="#fff"/><rect x="583.8" y="67.8" width="2.2" height="2.4" fill="#8a8a8a"/><rect x="586.0" y="67.8" width="2.2" height="2.4" fill="#fff"/><path d="M592 49.9 H606" stroke="#888" stroke-width="2"/><path d="M591 54.5 H607" stroke="#8a8a8a" stroke-width="1"/><path d="M591 56.5 H607" stroke="#8a8a8a" stroke-width="1"/><path d="M591 58.5 H600" stroke="#8a8a8a" stroke-width="1"/><path d="M592.3 69 L597.3 63.5 L600.3 67.8 L606 61.8" fill="none" stroke="#17a05a" stroke-width="2"/><g fill="none" stroke="#777" stroke-width="1.9"><circle cx="681" cy="57.9" r="13.9" fill="#fff"/><ellipse cx="680.5" cy="57.9" rx="4.2" ry="13.9"/><path d="M667.5 53.8 H694.5 M667.5 61.7 H694.5"/></g><g fill="#e8e8e8" stroke="#e8e8e8" stroke-width="1.6"><ellipse cx="691.4" cy="63.4" rx="3.6" ry="3.6"/><rect x="690.0" y="66.0" width="2.8" height="2.5"/><path d="M685.9 74 V70.8 Q685.9 68 688.6999999999999 68 H694.4000000000001 Q697.2 68 697.2 70.8 V74 Z"/></g><g fill="#3a78c0"><ellipse cx="691.4" cy="63.4" rx="3.6" ry="3.6"/><rect x="690.0" y="66.0" width="2.8" height="2.5"/><path d="M685.9 74 V70.8 Q685.9 68 688.6999999999999 68 H694.4000000000001 Q697.2 68 697.2 70.8 V74 Z"/></g><g fill="none" stroke-width="6.4"><path d="M759.31 47.10 A11.7 11.7 0 1 1 753.33 69.03" stroke="#3d78bc"/><path d="M752.80 68.72 A11.7 11.7 0 0 1 750.87 50.38" stroke="#d24a33"/><path d="M751.32 49.97 A11.7 11.7 0 0 1 758.59 47.11" stroke="#e9b35f"/></g><g transform="translate(803.7 43.7)"><path d="M0 0 H17.1 L22.8 5.4 V28.8 H0 Z" fill="#fff" stroke="#606060" stroke-width="1.05"/><path d="M17.1 0 V5.4 H22.8" fill="none" stroke="#606060" stroke-width="1.05"/><g fill="#2466b0"><rect x="3.5" y="10.7" width="1.9" height="5.5"/><rect x="6.5" y="6.6" width="1.9" height="9.6"/><rect x="9.5" y="8.5" width="1.9" height="7.7"/></g><path d="M13.9 9.8 H19.9 V18.9 M13.9 9.8 V25.3 M13.9 12.9 H19.9 M13.9 16 H19.9 M2.8 18.9 H19.9 M2.8 18.9 V25.3 H19 M2.8 22.1 H19 M8.8 18.9 V25.3" fill="none" stroke="#86a6d6" stroke-width="1"/><circle cx="22.45" cy="23.3" r="7.1" fill="#c9432b" stroke="#ececec" stroke-width="1"/><rect x="21.45" y="18.6" width="2" height="5.3" fill="#fff"/><rect x="21.45" y="25.6" width="2" height="1.8" fill="#fff"/></g></svg>
<svg class="r" style="left:0px;top:0px" width="60" height="190" viewBox="0 0 60 190"><g transform="translate(13.6 143.5)"><path d="M0 0 H17.1 L22.8 5.4 V28.8 H0 Z" fill="#fff" stroke="#606060" stroke-width="1.05"/><path d="M17.1 0 V5.4 H22.8" fill="none" stroke="#606060" stroke-width="1.05"/><g fill="#2466b0"><rect x="3.5" y="10.7" width="1.9" height="5.5"/><rect x="6.5" y="6.6" width="1.9" height="9.6"/><rect x="9.5" y="8.5" width="1.9" height="7.7"/></g><path d="M13.9 9.8 H19.9 V18.9 M13.9 9.8 V25.3 M13.9 12.9 H19.9 M13.9 16 H19.9 M2.8 18.9 H19.9 M2.8 18.9 V25.3 H19 M2.8 22.1 H19 M8.8 18.9 V25.3" fill="none" stroke="#86a6d6" stroke-width="1"/><circle cx="22.45" cy="23.3" r="7.1" fill="#c9432b" stroke="#fafafa" stroke-width="1"/><rect x="21.45" y="18.6" width="2" height="5.3" fill="#fff"/><rect x="21.45" y="25.6" width="2" height="1.8" fill="#fff"/></g></svg>
<svg class="r" style="left:0px;top:0px" width="470" height="216" viewBox="0 0 470 216"><circle cx="17.9" cy="201.9" r="7.2" fill="#fff" stroke="#2f6db5" stroke-width="1.5"/><path d="M13.5 201.9 H22.8 M18.6 198.2 L14.6 201.9 L18.6 205.6" fill="none" stroke="#2f6db5" stroke-width="1.9"/><path d="M260.6 203 V194.6 H267.9 L271.8 198.3 V203" fill="#fff" stroke="#444" stroke-width="1"/><path d="M267.9 194.6 V198.3 H271.8" fill="none" stroke="#444" stroke-width="1"/><rect x="259" y="202.9" width="16" height="7.1" rx="3.5" fill="#2d6db3"/><text x="267" y="209" font-family="Liberation Sans" font-weight="bold" font-size="6.3" fill="#fff" text-anchor="middle">CSV</text><path d="M317.70000000000005 203 V194.6 H325.0 L328.90000000000003 198.3 V203" fill="#fff" stroke="#b0b0b0" stroke-width="1"/><path d="M325.0 194.6 V198.3 H328.90000000000003" fill="none" stroke="#b0b0b0" stroke-width="1"/><rect x="316.1" y="202.9" width="16" height="7.1" rx="3.5" fill="#b0b0b0"/><text x="324.1" y="209" font-family="Liberation Sans" font-weight="bold" font-size="6.3" fill="#fff" text-anchor="middle">CSV</text><path d="M404.20000000000005 203 V194.6 H411.5 L415.40000000000003 198.3 V203" fill="#fff" stroke="#444" stroke-width="1"/><path d="M411.5 194.6 V198.3 H415.40000000000003" fill="none" stroke="#444" stroke-width="1"/><rect x="402.6" y="202.9" width="16" height="7.1" rx="3.5" fill="#2d6db3"/><text x="410.6" y="209" font-family="Liberation Sans" font-weight="bold" font-size="6.3" fill="#fff" text-anchor="middle">HTM</text></svg>
</body></html>
